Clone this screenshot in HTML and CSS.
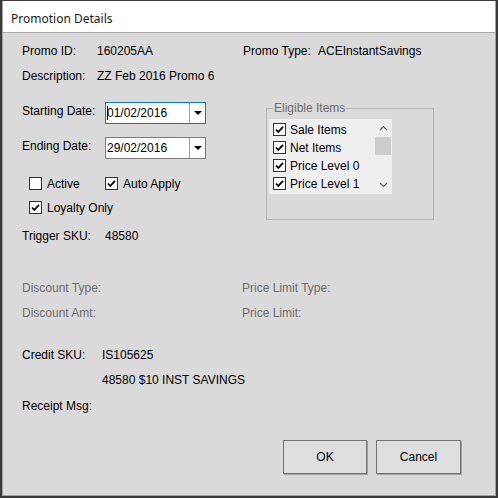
FILE: index.html
```html
<!DOCTYPE html>
<html>
<head>
<meta charset="utf-8">
<link rel="stylesheet" href="styles.css">
</head>
<body>
<div class="window">
  <div class="frame">
    <div class="titlebar">Promotion Details</div>
    <div class="content">
      <div class="row r-promo">
        <span class="lbl w75">Promo ID:</span><span class="val w146">160205AA</span>
        <span class="lbl w75">Promo Type:</span><span class="val">ACEInstantSavings</span>
      </div>
      <div class="row r-desc">
        <span class="lbl w75">Description:</span><span class="val">ZZ Feb 2016 Promo 6</span>
      </div>

      <div class="upper">
        <div class="leftcol">
          <div class="daterow">
            <span class="lbl w83 dl">Starting Date:</span>
            <div class="combo focused">
              <span class="ctext"><span class="caret"></span>01/02/2016</span>
              <span class="cbtn"><svg width="8" height="5" viewBox="0 0 8 5"><path d="M0 0H8L4 4Z" fill="#000"/></svg></span>
            </div>
          </div>
          <div class="daterow r-end">
            <span class="lbl w83 dl">Ending Date:</span>
            <div class="combo">
              <span class="ctext">29/02/2016</span>
              <span class="cbtn"><svg width="8" height="5" viewBox="0 0 8 5"><path d="M0 0H8L4 4Z" fill="#000"/></svg></span>
            </div>
          </div>
          <div class="checkrow r-chk1">
            <label class="chk c-active"><span class="box"></span><span>Active</span></label>
            <label class="chk c-auto"><span class="box on"><svg width="11" height="11" viewBox="0 0 11 11"><path d="M2 5.5L4.3 8L9 2.8" fill="none" stroke="#000" stroke-width="1.8"/></svg></span><span>Auto Apply</span></label>
          </div>
          <div class="checkrow r-chk2">
            <label class="chk c-active"><span class="box on"><svg width="11" height="11" viewBox="0 0 11 11"><path d="M2 5.5L4.3 8L9 2.8" fill="none" stroke="#000" stroke-width="1.8"/></svg></span><span>Loyalty Only</span></label>
          </div>
          <div class="row r-trig">
            <span class="lbl w83">Trigger SKU:</span><span class="val">48580</span>
          </div>
        </div>

        <div class="group">
          <span class="legend">Eligible Items</span>
          <div class="listbox">
            <div class="items">
              <div class="item"><span class="box on"><svg width="11" height="11" viewBox="0 0 11 11"><path d="M2 5.5L4.3 8L9 2.8" fill="none" stroke="#000" stroke-width="1.8"/></svg></span><span>Sale Items</span></div>
              <div class="item"><span class="box on"><svg width="11" height="11" viewBox="0 0 11 11"><path d="M2 5.5L4.3 8L9 2.8" fill="none" stroke="#000" stroke-width="1.8"/></svg></span><span>Net Items</span></div>
              <div class="item"><span class="box on"><svg width="11" height="11" viewBox="0 0 11 11"><path d="M2 5.5L4.3 8L9 2.8" fill="none" stroke="#000" stroke-width="1.8"/></svg></span><span>Price Level 0</span></div>
              <div class="item"><span class="box on"><svg width="11" height="11" viewBox="0 0 11 11"><path d="M2 5.5L4.3 8L9 2.8" fill="none" stroke="#000" stroke-width="1.8"/></svg></span><span>Price Level 1</span></div>
            </div>
            <div class="scrollbar">
              <span class="arrow"><svg width="9" height="6" viewBox="0 0 9 6"><path d="M1 5L4.5 1.5L8 5" fill="none" stroke="#606060" stroke-width="1.2"/></svg></span>
              <span class="thumb"></span>
              <span class="track"></span>
              <span class="arrow"><svg width="9" height="6" viewBox="0 0 9 6"><path d="M1 1L4.5 4.5L8 1" fill="none" stroke="#606060" stroke-width="1.2"/></svg></span>
            </div>
          </div>
        </div>
      </div>

      <div class="row r-dtype dis">
        <span class="lbl w220">Discount Type:</span><span class="lbl">Price Limit Type:</span>
      </div>
      <div class="row r-damt dis">
        <span class="lbl w220">Discount Amt:</span><span class="lbl">Price Limit:</span>
      </div>
      <div class="row r-credit">
        <span class="lbl w80">Credit SKU:</span><span class="val">IS105625</span>
      </div>
      <div class="row r-inst">
        <span class="lbl w80"></span><span class="val">48580 $10 INST SAVINGS</span>
      </div>
      <div class="row r-receipt">
        <span class="lbl">Receipt Msg:</span>
      </div>

      <div class="buttons">
        <button class="btn ok">OK</button>
        <button class="btn cancel">Cancel</button>
      </div>
    </div>
  </div>
</div>
</body>
</html>
```

FILE: styles.css
```css
html, body {
  margin: 0;
  padding: 0;
  background: #ffffff;
}
.window {
  width: 498px;
  height: 498px;
  box-sizing: border-box;
  border-style: solid;
  border-color: #3a3a3a;
  border-width: 1px 2px 2px 2px;
  font-family: "Liberation Sans", Arial, sans-serif;
  font-size: 12px;
  color: #000;
}
.frame {
  height: 100%;
  box-sizing: border-box;
  border-style: solid;
  border-color: #a2a2a2;
  border-width: 0 1px 1px 1px;
  background: #dadada;
  display: flex;
  flex-direction: column;
}
.titlebar {
  height: 32px;
  box-sizing: border-box;
  background: #ffffff;
  border-bottom: 1px solid #a8a8a8;
  padding: 10px 0 0 8px;
  font-family: "Noto Sans", "Segoe UI", sans-serif;
  font-size: 12px;
  line-height: 16px;
  color: #1a1a1a;
}
.content {
  padding: 11px 0 0 19px;
  display: flex;
  flex-direction: column;
}
.row {
  display: flex;
  height: 14px;
  line-height: 14px;
  align-items: center;
}
.lbl, .val {
  white-space: nowrap;
}
.w75 { width: 75px; flex: none; }
.w83 { width: 83px; flex: none; }
.w80 { width: 80px; flex: none; }
.w146 { width: 146px; flex: none; }
.w220 { width: 220px; flex: none; }
.dis { color: #6d6d6d; }

.r-desc { margin-top: 11px; }

.upper {
  display: flex;
  margin-top: 19px;
}
.leftcol {
  width: 244px;
  display: flex;
  flex-direction: column;
}
.daterow {
  display: flex;
  align-items: flex-start;
  height: 22px;
}
.dl { margin-top: 2px; line-height: 14px; }
.r-end { margin-top: 13px; }
.combo {
  width: 101px;
  height: 22px;
  box-sizing: border-box;
  border: 1px solid #7a7a7a;
  background: #fff;
  display: flex;
}
.combo.focused { border-color: #0078d7; }
.ctext {
  flex: 1;
  padding-left: 1px;
  line-height: 20px;
  display: flex;
  align-items: center;
  white-space: nowrap;
}
.caret {
  display: inline-block;
  width: 1px;
  height: 14px;
  background: #000;
  margin-right: -1px;
}
.cbtn {
  width: 15px;
  border-left: 1px solid #a0a0a0;
  display: flex;
  align-items: center;
  justify-content: center;
  padding-top: 1px;
}

.checkrow {
  display: flex;
  height: 13px;
}
.r-chk1 { margin-top: 18px; }
.r-chk2 { margin-top: 11px; }
.chk {
  display: flex;
  align-items: center;
  gap: 5px;
  white-space: nowrap;
}
.c-active { margin-left: 7px; width: 76px; }
.box {
  width: 13px;
  height: 13px;
  box-sizing: border-box;
  border: 1px solid #333;
  background: #fff;
  display: flex;
  align-items: center;
  justify-content: center;
  flex: none;
}
.r-trig { margin-top: 15px; }

.group {
  position: relative;
  margin-top: 6px;
  width: 168px;
  height: 112px;
  box-sizing: border-box;
  border: 1px solid #b4b4b4;
  padding: 10px 0 0 2px;
}
.legend {
  position: absolute;
  left: 6px;
  top: -8px;
  padding: 0 1px;
  background: #dadada;
  color: #6d6d6d;
  line-height: 14px;
}
.listbox {
  width: 123px;
  height: 75px;
  background: #efefef;
  display: flex;
}
.items {
  flex: 1;
  padding: 4px 0 0 4px;
  display: flex;
  flex-direction: column;
  gap: 5px;
}
.item {
  display: flex;
  align-items: center;
  gap: 4px;
  height: 13px;
  white-space: nowrap;
}
.scrollbar {
  width: 18px;
  display: flex;
  flex-direction: column;
  align-items: center;
}
.arrow {
  height: 18px;
  display: flex;
  align-items: center;
  justify-content: center;
}
.thumb {
  width: 16px;
  height: 18px;
  background: #cdcdcd;
}
.track { flex: 1; }

.r-dtype { margin-top: 38px; }
.r-damt { margin-top: 11px; }
.r-credit { margin-top: 28px; }
.r-inst { margin-top: 11px; }
.r-receipt { margin-top: 12px; }

.buttons {
  margin-top: 27px;
  display: flex;
  gap: 9px;
  padding-left: 261px;
}
.btn {
  width: 85px;
  height: 34px;
  box-sizing: border-box;
  border: 1px solid #737373;
  box-shadow: 1px 1px 0 #a0a0a0;
  background: #dedede;
  font-family: "Liberation Sans", Arial, sans-serif;
  font-size: 12px;
  color: #000;
  padding: 0;
}
.ok { width: 84px; }
```
